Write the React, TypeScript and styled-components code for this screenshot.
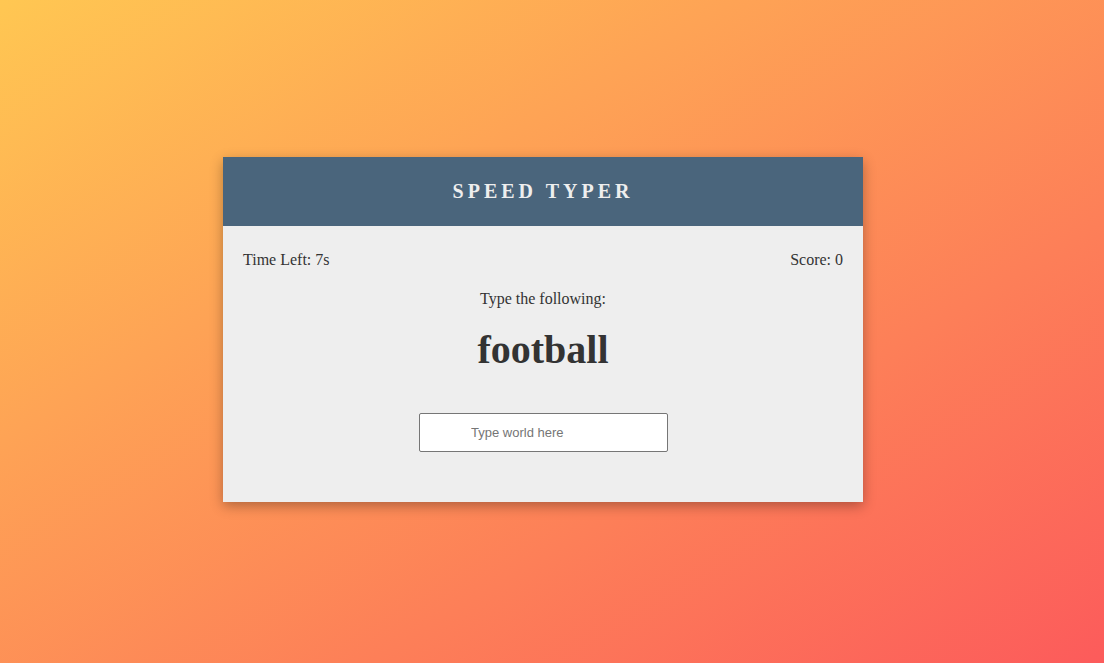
import React from "react";
import styled, { createGlobalStyle } from "styled-components";

const Global = createGlobalStyle`
  html, body { margin: 0; padding: 0; height: 100%; }
  body { font-family: "Liberation Serif", "Times New Roman", serif; }
  #root { height: 100%; }
`;

const Page = styled.div`
  min-height: 663px;
  height: 100%;
  box-sizing: border-box;
  background: linear-gradient(to bottom right, #ffc752, #fc5b5b);
  display: flex;
  align-items: center;
  justify-content: center;
  padding: 0 18px 4px 0;
`;

const Card = styled.main`
  width: 640px;
  background: #eeeeee;
  box-shadow: 0 4px 12px rgba(0, 0, 0, 0.3);
  display: flex;
  flex-direction: column;
`;

const Header = styled.header`
  height: 69px;
  background: #4a657c;
  display: flex;
  align-items: center;
  justify-content: center;
`;

const Title = styled.h1`
  margin: 0;
  color: #eeeeee;
  font-size: 20px;
  font-weight: bold;
  letter-spacing: 4px;
`;

const Body = styled.section`
  padding: 24px 20px 50px;
  display: flex;
  flex-direction: column;
  align-items: center;
  color: #333;
  font-size: 16px;
`;

const StatsRow = styled.div`
  align-self: stretch;
  display: flex;
  justify-content: space-between;
  line-height: 19px;
`;

const Prompt = styled.p`
  margin: 20px 0 0;
  line-height: 19px;
`;

const Word = styled.h2`
  margin: 19px 0 0;
  font-size: 40px;
  font-weight: bold;
  line-height: 46px;
`;

const WordInput = styled.input`
  margin: 40px 0 0 1px;
  width: 249px;
  height: 39px;
  box-sizing: border-box;
  border: 1px solid #767676;
  border-radius: 2px;
  background: #fff;
  padding: 0 10px 0 51px;
  font-family: "Liberation Sans", Arial, sans-serif;
  font-size: 13px;
  color: #333;
  outline: none;
  &::placeholder { color: #757575; }
`;

export default function App() {
  return (
    <>
      <Global />
      <Page>
        <Card>
          <Header>
            <Title>SPEED TYPER</Title>
          </Header>
          <Body>
            <StatsRow>
              <span>Time Left: 7s</span>
              <span>Score: 0</span>
            </StatsRow>
            <Prompt>Type the following:</Prompt>
            <Word>football</Word>
            <WordInput placeholder="Type world here" />
          </Body>
        </Card>
      </Page>
    </>
  );
}
